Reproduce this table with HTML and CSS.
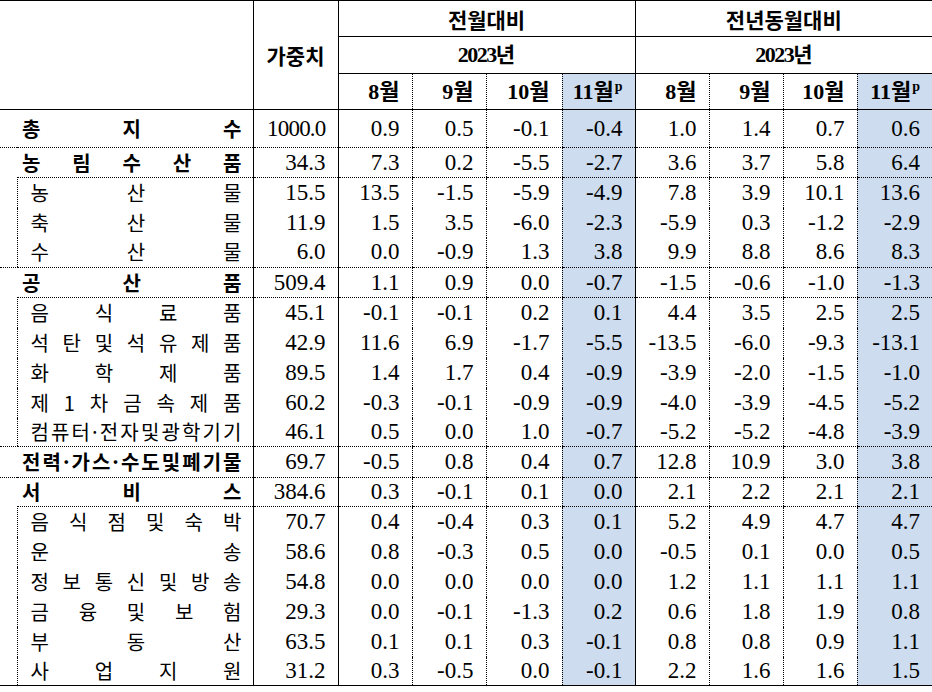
FILE: index.html
```html
<!DOCTYPE html>
<html lang="ko">
<head>
<meta charset="utf-8">
<title>물가지수</title>
<link rel="stylesheet" href="styles.css">
</head>
<body>
<table class="tbl">
  <colgroup>
    <col class="c-ind"><col class="c-lbl"><col class="c-wt">
    <col class="c-74"><col class="c-74"><col class="c-76"><col class="c-73">
    <col class="c-74"><col class="c-74"><col class="c-74"><col class="c-75">
  </colgroup>
  <thead>
    <tr class="hr1">
      <th class="corner" colspan="2" rowspan="3"></th>
      <th class="wt-h" rowspan="3">가중치</th>
      <th class="grp-h" colspan="4">전월대비</th>
      <th class="grp-h gs" colspan="4">전년동월대비</th>
    </tr>
    <tr class="hr2">
      <th class="yr" colspan="4"><span class="yn">2023</span>년</th>
      <th class="yr gs" colspan="4"><span class="yn">2023</span>년</th>
    </tr>
    <tr class="hr3">
      <th class="mo gs">8월</th><th class="mo">9월</th><th class="mo">10월</th><th class="mo hl">11월<sup>p</sup></th>
      <th class="mo gs">8월</th><th class="mo">9월</th><th class="mo">10월</th><th class="mo hl">11월<sup>p</sup></th>
    </tr>
  </thead>
  <tbody>
    <tr class="r-total sep">
      <th class="lbl" colspan="2"><div class="d"><span>총</span><span>지</span><span>수</span></div></th>
      <td class="w tight">1000.0</td><td class="m gs">0.9</td><td class="m">0.5</td><td class="m">-0.1</td><td class="m hl">-0.4</td><td class="m gs">1.0</td><td class="m">1.4</td><td class="m">0.7</td><td class="m hl">0.6</td>
    </tr>
    <tr class="sepx">
      <th class="lbl" colspan="2"><div class="d"><span>농</span><span>림</span><span>수</span><span>산</span><span>품</span></div></th>
      <td class="w">34.3</td><td class="m gs">7.3</td><td class="m">0.2</td><td class="m">-5.5</td><td class="m hl">-2.7</td><td class="m gs">3.6</td><td class="m">3.7</td><td class="m">5.8</td><td class="m hl">6.4</td>
    </tr>
    <tr>
      <th class="ind" rowspan="3"></th>
      <th class="lbl sub first"><div class="d"><span>농</span><span>산</span><span>물</span></div></th>
      <td class="w">15.5</td><td class="m gs">13.5</td><td class="m">-1.5</td><td class="m">-5.9</td><td class="m hl">-4.9</td><td class="m gs">7.8</td><td class="m">3.9</td><td class="m">10.1</td><td class="m hl">13.6</td>
    </tr>
    <tr>
      <th class="lbl sub"><div class="d"><span>축</span><span>산</span><span>물</span></div></th>
      <td class="w">11.9</td><td class="m gs">1.5</td><td class="m">3.5</td><td class="m">-6.0</td><td class="m hl">-2.3</td><td class="m gs">-5.9</td><td class="m">0.3</td><td class="m">-1.2</td><td class="m hl">-2.9</td>
    </tr>
    <tr class="sep">
      <th class="lbl sub"><div class="d"><span>수</span><span>산</span><span>물</span></div></th>
      <td class="w">6.0</td><td class="m gs">0.0</td><td class="m">-0.9</td><td class="m">1.3</td><td class="m hl">3.8</td><td class="m gs">9.9</td><td class="m">8.8</td><td class="m">8.6</td><td class="m hl">8.3</td>
    </tr>
    <tr class="sepx">
      <th class="lbl" colspan="2"><div class="d"><span>공</span><span>산</span><span>품</span></div></th>
      <td class="w">509.4</td><td class="m gs">1.1</td><td class="m">0.9</td><td class="m">0.0</td><td class="m hl">-0.7</td><td class="m gs">-1.5</td><td class="m">-0.6</td><td class="m">-1.0</td><td class="m hl">-1.3</td>
    </tr>
    <tr>
      <th class="ind" rowspan="5"></th>
      <th class="lbl sub first"><div class="d"><span>음</span><span>식</span><span>료</span><span>품</span></div></th>
      <td class="w">45.1</td><td class="m gs">-0.1</td><td class="m">-0.1</td><td class="m">0.2</td><td class="m hl">0.1</td><td class="m gs">4.4</td><td class="m">3.5</td><td class="m">2.5</td><td class="m hl">2.5</td>
    </tr>
    <tr>
      <th class="lbl sub"><div class="d"><span>석</span><span>탄</span><span>및</span><span>석</span><span>유</span><span>제</span><span>품</span></div></th>
      <td class="w">42.9</td><td class="m gs">11.6</td><td class="m">6.9</td><td class="m">-1.7</td><td class="m hl">-5.5</td><td class="m gs">-13.5</td><td class="m">-6.0</td><td class="m">-9.3</td><td class="m hl">-13.1</td>
    </tr>
    <tr>
      <th class="lbl sub"><div class="d"><span>화</span><span>학</span><span>제</span><span>품</span></div></th>
      <td class="w">89.5</td><td class="m gs">1.4</td><td class="m">1.7</td><td class="m">0.4</td><td class="m hl">-0.9</td><td class="m gs">-3.9</td><td class="m">-2.0</td><td class="m">-1.5</td><td class="m hl">-1.0</td>
    </tr>
    <tr>
      <th class="lbl sub"><div class="d"><span>제</span><span>1</span><span>차</span><span>금</span><span>속</span><span>제</span><span>품</span></div></th>
      <td class="w">60.2</td><td class="m gs">-0.3</td><td class="m">-0.1</td><td class="m">-0.9</td><td class="m hl">-0.9</td><td class="m gs">-4.0</td><td class="m">-3.9</td><td class="m">-4.5</td><td class="m hl">-5.2</td>
    </tr>
    <tr class="sep h29">
      <th class="lbl sub"><div class="d"><span>컴</span><span>퓨</span><span>터</span><span>·</span><span>전</span><span>자</span><span>및</span><span>광</span><span>학</span><span>기</span><span>기</span></div></th>
      <td class="w">46.1</td><td class="m gs">0.5</td><td class="m">0.0</td><td class="m">1.0</td><td class="m hl">-0.7</td><td class="m gs">-5.2</td><td class="m">-5.2</td><td class="m">-4.8</td><td class="m hl">-3.9</td>
    </tr>
    <tr class="sep h31">
      <th class="lbl" colspan="2"><div class="d"><span>전</span><span>력</span><span>·</span><span>가</span><span>스</span><span>·</span><span>수</span><span>도</span><span>및</span><span>폐</span><span>기</span><span>물</span></div></th>
      <td class="w">69.7</td><td class="m gs">-0.5</td><td class="m">0.8</td><td class="m">0.4</td><td class="m hl">0.7</td><td class="m gs">12.8</td><td class="m">10.9</td><td class="m">3.0</td><td class="m hl">3.8</td>
    </tr>
    <tr class="sepx h29">
      <th class="lbl" colspan="2"><div class="d"><span>서</span><span>비</span><span>스</span></div></th>
      <td class="w">384.6</td><td class="m gs">0.3</td><td class="m">-0.1</td><td class="m">0.1</td><td class="m hl">0.0</td><td class="m gs">2.1</td><td class="m">2.2</td><td class="m">2.1</td><td class="m hl">2.1</td>
    </tr>
    <tr>
      <th class="ind last-ind" rowspan="6"></th>
      <th class="lbl sub first"><div class="d"><span>음</span><span>식</span><span>점</span><span>및</span><span>숙</span><span>박</span></div></th>
      <td class="w">70.7</td><td class="m gs">0.4</td><td class="m">-0.4</td><td class="m">0.3</td><td class="m hl">0.1</td><td class="m gs">5.2</td><td class="m">4.9</td><td class="m">4.7</td><td class="m hl">4.7</td>
    </tr>
    <tr>
      <th class="lbl sub"><div class="d"><span>운</span><span>송</span></div></th>
      <td class="w">58.6</td><td class="m gs">0.8</td><td class="m">-0.3</td><td class="m">0.5</td><td class="m hl">0.0</td><td class="m gs">-0.5</td><td class="m">0.1</td><td class="m">0.0</td><td class="m hl">0.5</td>
    </tr>
    <tr>
      <th class="lbl sub"><div class="d"><span>정</span><span>보</span><span>통</span><span>신</span><span>및</span><span>방</span><span>송</span></div></th>
      <td class="w">54.8</td><td class="m gs">0.0</td><td class="m">0.0</td><td class="m">0.0</td><td class="m hl">0.0</td><td class="m gs">1.2</td><td class="m">1.1</td><td class="m">1.1</td><td class="m hl">1.1</td>
    </tr>
    <tr>
      <th class="lbl sub"><div class="d"><span>금</span><span>융</span><span>및</span><span>보</span><span>험</span></div></th>
      <td class="w">29.3</td><td class="m gs">0.0</td><td class="m">-0.1</td><td class="m">-1.3</td><td class="m hl">0.2</td><td class="m gs">0.6</td><td class="m">1.8</td><td class="m">1.9</td><td class="m hl">0.8</td>
    </tr>
    <tr>
      <th class="lbl sub"><div class="d"><span>부</span><span>동</span><span>산</span></div></th>
      <td class="w">63.5</td><td class="m gs">0.1</td><td class="m">0.1</td><td class="m">0.3</td><td class="m hl">-0.1</td><td class="m gs">0.8</td><td class="m">0.8</td><td class="m">0.9</td><td class="m hl">1.1</td>
    </tr>
    <tr class="last h29">
      <th class="lbl sub"><div class="d"><span>사</span><span>업</span><span>지</span><span>원</span></div></th>
      <td class="w">31.2</td><td class="m gs">0.3</td><td class="m">-0.5</td><td class="m">0.0</td><td class="m hl">-0.1</td><td class="m gs">2.2</td><td class="m">1.6</td><td class="m">1.6</td><td class="m hl">1.5</td>
    </tr>
  </tbody>
</table>
</body>
</html>
```

FILE: styles.css
```css
html, body {
  margin: 0;
  padding: 0;
  background: #ffffff;
}

.tbl {
  border-collapse: collapse;
  table-layout: fixed;
  width: 932px;
  color: #000;
  font-family: "Liberation Serif", "Noto Sans CJK KR", serif;
}

th, td {
  padding: 0;
  border: 0;
  line-height: 24px;
  vertical-align: middle;
}

.c-ind { width: 17px; }
.c-lbl { width: 236px; }
.c-wt { width: 85px; }
.c-73 { width: 73px; }
.c-74 { width: 74px; }
.c-75 { width: 75px; }
.c-76 { width: 76px; }

/* header */
.hr1 { height: 36px; }
.hr2 { height: 37px; }
.hr3 { height: 36px; }

.tbl .hr1 > th { border-top: 1px solid #000; }

.corner {
  border-bottom: 1px solid #000;
}

.wt-h {
  border-left: 1px solid #000;
  border-right: 1px solid #000;
  border-bottom: 1px solid #000;
  font-family: "Noto Sans CJK KR", sans-serif;
  font-weight: 700;
  font-size: 21px;
  text-align: center;
}

.grp-h {
  border-bottom: 1px solid #000;
  font-family: "Noto Sans CJK KR", sans-serif;
  font-weight: 700;
  font-size: 21px;
  text-align: center;
}

.yr {
  border-bottom: 1px solid #000;
  font-family: "Liberation Serif", "Noto Sans CJK KR", serif;
  font-weight: 700;
  font-size: 21px;
  text-align: center;
}

.yn {
  letter-spacing: -1.5px;
  font-size: 22px;
}

.gs { border-left: 1px solid #000; }

.mo {
  border-bottom: 1px solid #000;
  border-left: 1px dotted #000;
  font-family: "Liberation Serif", "Noto Sans CJK KR", serif;
  font-weight: 700;
  font-size: 22px;
  text-align: right;
  padding-right: 12px;
}

.mo.gs { border-left: 1px solid #000; }

.mo sup {
  font-size: 14px;
  line-height: 0;
  vertical-align: 8px;
  margin-left: 1px;
}

.hl { background: #cddcee; }

/* body */
tbody tr { height: 30px; }
tbody tr.r-total { height: 38px; }
tbody tr.h29 { height: 29px; }
tbody tr.h31 { height: 31px; }

td.w,
td.m {
  font-family: "Liberation Serif", serif;
  font-size: 23px;
  text-align: right;
  padding-right: 12px;
}

td.w {
  border-left: 1px solid #000;
  border-right: 1px solid #000;
}

td.w.tight { letter-spacing: -0.8px; }

td.m { border-left: 1px dotted #000; }
td.m.gs { border-left: 1px solid #000; }

.lbl {
  font-family: "Noto Sans CJK KR", sans-serif;
  font-size: 20px;
  font-weight: 700;
  text-align: left;
  padding: 0 11px 0 22px;
}

.lbl.sub {
  font-weight: 400;
  padding-left: 13px;
  border-left: 1px dotted #000;
}

.lbl.first { border-top: 1px dotted #000; }

.d {
  display: flex;
  justify-content: space-between;
  align-items: center;
}

.tbl tr.sep > td,
.tbl tr.sep > th { border-bottom: 1px dotted #000; }

.tbl tr.sepx > td { border-bottom: 1px dotted #000; }

.tbl .ind { border-bottom: 1px dotted #000; }
.tbl .ind.last-ind { border-bottom: 1px solid #000; }

.tbl tr.last > td,
.tbl tr.last > th { border-bottom: 1px solid #000; }
```
